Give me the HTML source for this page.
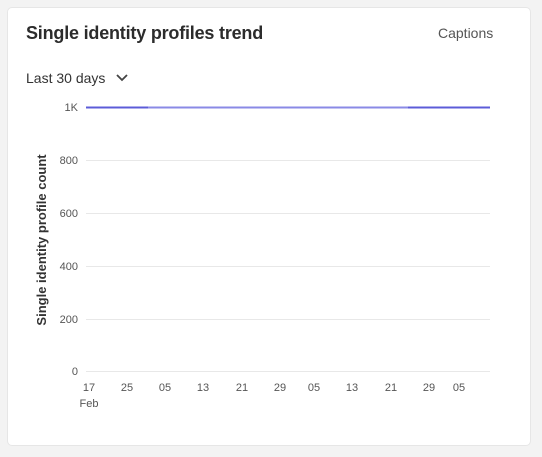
<!DOCTYPE html>
<html><head><style>
body{margin:0;width:542px;height:457px;background:#f3f3f3;font-family:"Liberation Sans",sans-serif;position:relative;overflow:hidden}
.card{position:absolute;left:8px;top:8px;width:522px;height:437px;background:#fff;border-radius:4px;box-shadow:0 0 0 1px #e6e6e6}
.t{position:absolute;font-size:13px;color:#444}
</style></head><body>
<div class="card"></div>
<div class="t" style="left:26px;top:23px;font-size:18px;font-weight:bold;color:#2c2c2c;letter-spacing:-0.2px">Single identity profiles trend</div>
<div class="t" style="left:438px;top:25px;font-size:14px;color:#555">Captions</div>
<div class="t" style="left:26px;top:70px;font-size:14px;color:#333">Last 30 days</div>
<svg width="542" height="457" style="position:absolute;left:0;top:0">
<path d="M117 75 L122 80 L127 75" stroke="#444" stroke-width="1.8" fill="none"/>
<g stroke="#e8e8e8" stroke-width="1">
<line x1="86" y1="160.5" x2="490" y2="160.5"/><line x1="86" y1="213.5" x2="490" y2="213.5"/>
<line x1="86" y1="266.5" x2="490" y2="266.5"/><line x1="86" y1="319.5" x2="490" y2="319.5"/>
<line x1="86" y1="371.5" x2="490" y2="371.5"/></g>
<line x1="86" y1="107.5" x2="490" y2="107.5" stroke="#8a8ae6" stroke-width="2"/>
<line x1="86" y1="107.5" x2="148" y2="107.5" stroke="#5c5cd8" stroke-width="2"/>
<line x1="408" y1="107.5" x2="490" y2="107.5" stroke="#5c5cd8" stroke-width="2"/>
<g font-family="Liberation Sans,sans-serif" font-size="11" fill="#555" text-anchor="end">
<text x="78" y="111">1K</text><text x="78" y="164">800</text><text x="78" y="217">600</text>
<text x="78" y="270">400</text><text x="78" y="323">200</text><text x="78" y="375">0</text></g>
<g font-family="Liberation Sans,sans-serif" font-size="11" fill="#555" text-anchor="middle">
<text x="89" y="391">17</text><text x="127" y="391">25</text><text x="165" y="391">05</text>
<text x="203" y="391">13</text><text x="242" y="391">21</text><text x="280" y="391">29</text>
<text x="314" y="391">05</text><text x="352" y="391">13</text><text x="391" y="391">21</text>
<text x="429" y="391">29</text><text x="459" y="391">05</text><text x="89" y="407">Feb</text></g>
<text transform="translate(46,240) rotate(-90)" text-anchor="middle" font-family="Liberation Sans,sans-serif" font-size="13" font-weight="bold" fill="#333">Single identity profile count</text>
</svg>
</body></html>
